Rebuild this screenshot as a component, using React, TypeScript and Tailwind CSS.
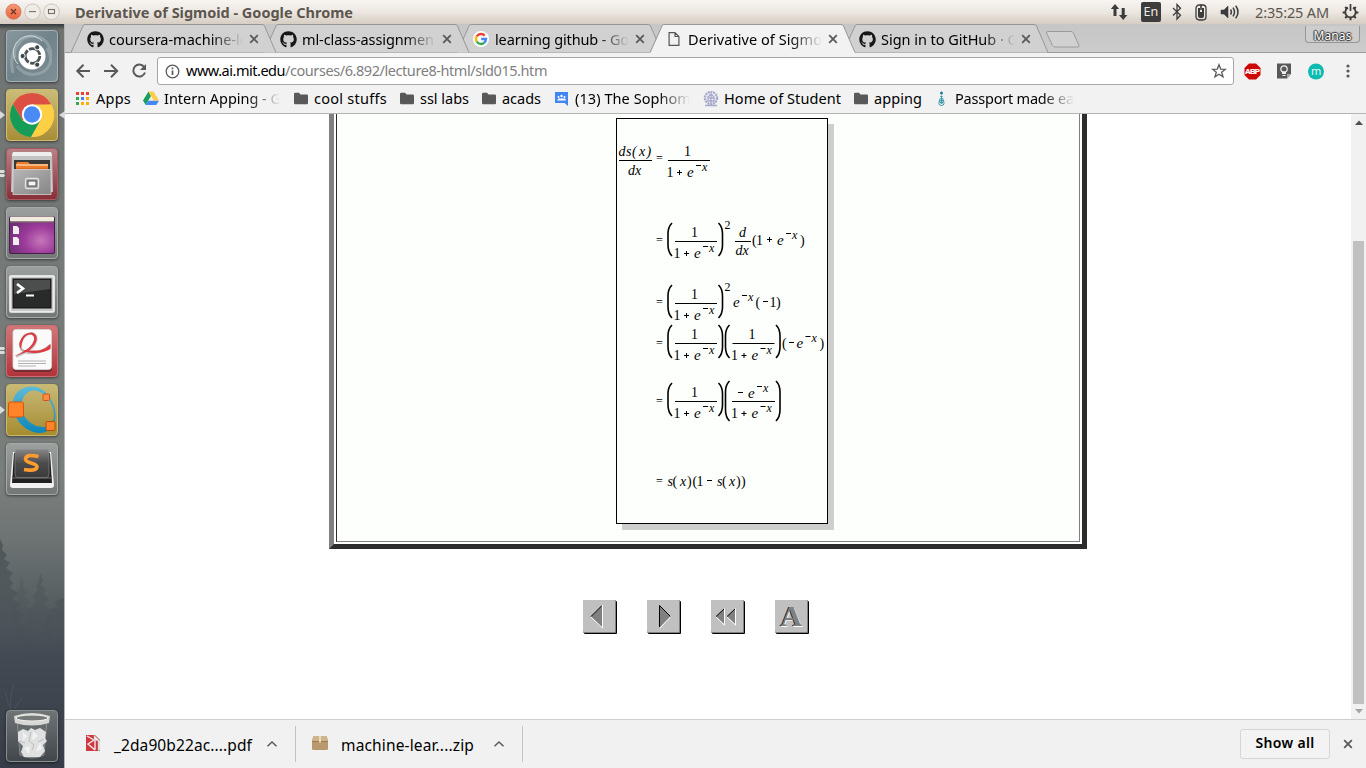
import React, { useLayoutEffect, useRef, useState } from 'react';
import { FaGithub } from 'react-icons/fa';

/** Single line of text whose tracking is tuned so that it spans `w` pixels. */
function Fit({ w, clip, className = '', children }: { w: number; clip?: number; className?: string; children: string }) {
  const ref = useRef<HTMLSpanElement>(null);
  const [spacing, setSpacing] = useState(0);
  useLayoutEffect(() => {
    if (ref.current) setSpacing((w - ref.current.getBoundingClientRect().width) / children.length);
  }, [w, children]);
  return (
    <span
      className={`block shrink-0 whitespace-pre ${clip ? 'overflow-hidden [mask-image:linear-gradient(to_right,black_calc(100%-32px),transparent)]' : ''} ${className}`}
      style={{ width: clip ?? w }}
    >
      <span ref={ref} className="inline-block" style={{ letterSpacing: spacing }}>
        {children}
      </span>
    </span>
  );
}

function Cross({ className = '' }: { className?: string }) {
  return (
    <svg className={className} width="10" height="10" viewBox="0 0 10 10">
      <path d="M1.2 1.2 8.8 8.8M8.8 1.2 1.2 8.8" stroke="#5a5a5a" strokeWidth="1.8" />
    </svg>
  );
}

/* ---------- top panel ---------- */

function TopPanel() {
  return (
    <header className="flex h-6 shrink-0 items-center bg-linear-to-b from-[#f7f5f2] via-[#ece7e1] to-[#d6cdc3] pl-[5px] pr-[7px]">
      <svg width="56" height="18" viewBox="0 0 56 18">
        <defs>
          <linearGradient id="close" x1="0" y1="0" x2="0" y2="1">
            <stop offset="0" stopColor="#f79a77" />
            <stop offset="1" stopColor="#e8623a" />
          </linearGradient>
        </defs>
        <circle cx="8.5" cy="8.7" r="7.6" fill="url(#close)" stroke="#cf7b5e" strokeWidth=".8" />
        <path d="M6 6.2l5 5M11 6.2l-5 5" stroke="#5a2d1e" strokeWidth="1.2" />
        <circle cx="27.5" cy="8.7" r="7.8" fill="#efebe6" stroke="#c8c0b8" strokeWidth=".9" />
        <path d="M24 8.6h7" stroke="#77716a" strokeWidth="1.1" />
        <circle cx="46.5" cy="8.7" r="7.8" fill="#efebe6" stroke="#c8c0b8" strokeWidth=".9" />
        <rect x="43.5" y="6.5" width="6" height="4" fill="none" stroke="#77716a" strokeWidth="1.1" />
      </svg>
      <Fit w={278} className="ml-[14px] -mt-px text-[14.5px] leading-6 font-bold text-[#5c564f]">
        Derivative of Sigmoid - Google Chrome
      </Fit>
      <div className="flex-1" />
      <svg width="18" height="18" viewBox="0 0 18 18" fill="#3c3c3c" className="mr-[13px]">
        <path d="M5 1 0.8 6H3.5V13H6.5V6H9.2ZM13.2 17 9 12H11.7V5H14.7V12H17.4Z" />
      </svg>
      <div className="mr-[11px] flex h-5 w-5 items-center justify-center rounded-[2px] bg-[#3c3c3c] text-[12.5px] leading-5 text-[#f0ece7]">
        <Fit w={15}>En</Fit>
      </div>
      <svg width="10" height="18" viewBox="0 0 10 18" fill="none" stroke="#3c3c3c" strokeWidth="1.3" className="mr-[13px]">
        <path d="M1 5 8.5 12.2 5 16V1.5L8.5 5.3 1 12.5" />
      </svg>
      <svg width="12" height="18" viewBox="0 0 12 18" className="mr-[13px]">
        <rect x="1" y="2" width="10" height="15" rx="3.2" fill="none" stroke="#3c3c3c" strokeWidth="1.3" />
        <path d="M3 5H5V9H7V5H9V13Q9 15 7 15H5Q3 15 3 13Z" fill="#3c3c3c" />
        <path d="M5.2 1.5V7h1.6V1.5z" fill="#3c3c3c" />
      </svg>
      <svg width="20" height="16" viewBox="0 0 20 16" fill="none" stroke="#3c3c3c" strokeWidth="1.5" className="mr-[15px]">
        <path d="M1 6H4L8 2V14L4 10H1Z" fill="#3c3c3c" strokeWidth=".6" />
        <path d="M10.5 5.5Q12.3 8 10.5 10.5M13 3.6Q16 8 13 12.4M15.7 1.8Q20.3 8 15.7 14.2" />
      </svg>
      <Fit w={74} className="-mt-px text-[14.5px] leading-6 text-[#5c564f]">2:35:25 AM</Fit>
      <svg width="17" height="18" viewBox="0 0 17 18" fill="none" stroke="#3c3c3c" className="ml-[13px]">
        <path d="M6 4.6A5.2 5.2 0 1 0 11 4.6" strokeWidth="1.8" />
        <path d="M8.500 1V8" strokeWidth="1.7" />
        <path d="M3.2 4 5 5.8M13.8 4 12 5.8M.6 9.5H3M14 9.5H16.4M3.2 15 5 13.2M13.8 15 12 13.2M8.5 14.5V17.2" strokeWidth="2" />
      </svg>
    </header>
  );
}

/* ---------- launcher ---------- */

const tile = 'relative flex h-[52px] w-[52px] shrink-0 items-center justify-center rounded-[4px] shadow-[0_1px_3px_rgba(0,0,0,0.5)] border';

function Launcher() {
  return (
    <aside className="relative flex w-[65px] shrink-0 flex-col items-start gap-[7px] border-r border-[#b5b5b0] bg-linear-to-b from-[#6f7371] from-0% via-[#7b807d] via-65% to-[#767b79] pl-[6px] pt-[6px] pb-[6px]">
      <div className="absolute inset-x-0 top-0 h-[6px] bg-linear-to-b from-[#33393b] to-transparent" />
      <svg className="absolute left-0 top-[460px] w-16" height="284" viewBox="0 0 64 284">
        <defs>
          <linearGradient id="haze" x1="0" y1="0" x2="0" y2="1">
            <stop offset="0" stopColor="#7a7f7c" />
            <stop offset=".2" stopColor="#6d7373" />
            <stop offset=".4" stopColor="#596062" />
            <stop offset=".6" stopColor="#434a53" />
            <stop offset="1" stopColor="#373d48" />
          </linearGradient>
          <linearGradient id="tree" x1="0" y1="0" x2="0" y2="1">
            <stop offset="0" stopColor="#50575a" />
            <stop offset="1" stopColor="#424953" stopOpacity="0" />
          </linearGradient>
        </defs>
        <rect width="64" height="284" fill="url(#haze)" />
        <path d="M0 55 3 61 2 66 7 71 4 75 10 79 6 84 13 89 9 94 13 99 10 104 18 109 13 115 21 120 16 125 24 130 19 137 28 145V190H0Z" fill="url(#tree)" />
        <path d="M21 92 24 100 23 104 27 108 24 113 30 118 26 122 32 128V170H12V125L18 115 16 110 20 102Z" fill="url(#tree)" opacity=".45" />
        <path d="M40 88 43 96 41 101 46 106 43 110 49 115 44 120 51 128V180H29V126L36 116 32 113 38 106 36 102 39 97Z" fill="url(#tree)" opacity=".65" />
        <path d="M64 114 59 115 55 119 57 123 50 125 52 130 45 133 48 138 42 140 46 145 40 149 47 153 49 175H64Z" fill="url(#tree)" />
        <path d="M12 240Q8 215 14 200M9 222 5 208M14 225 22 214" stroke="#555e66" fill="none" opacity=".5" />
      </svg>

      <div className={`${tile} border-[#a6b1b5] bg-linear-to-br from-[#87979d] via-[#71838a] to-[#7f9096]`}>
        <svg width="50" height="50" viewBox="0 0 50 50" fill="none">
          <path d="M8 27Q5 8 25 5 43 6 44 25M10 35Q20 48 36 41 49 32 40 17M6 42Q1 22 14 10" stroke="#b1bdc1" strokeWidth="3" opacity=".45" />
          <path d="M11 33A16 16 0 0 1 35 10" stroke="#d1d9dc" strokeWidth="1" />
          <circle cx="25" cy="25" r="13.5" fill="#fff" />
          <circle cx="25.5" cy="25" r="7.3" stroke="#4a5358" strokeWidth="2.8" strokeDasharray="13.8 1.5" />
          <g fill="#3f484c" stroke="#fff" strokeWidth="1">
            <circle cx="15.6" cy="25" r="2.6" />
            <circle cx="30.2" cy="16.3" r="2.6" />
            <circle cx="30.2" cy="33.7" r="2.6" />
          </g>
        </svg>
      </div>

      <div className={`${tile} border-[#d0bd70] bg-linear-to-b from-[#cbbc79] to-[#a98e37]`}>
        <svg width="46" height="46" viewBox="0 0 46 46">
          <circle cx="23" cy="23" r="22" fill="#fdc93c" />
          <path d="M4 12A22 22 0 0 1 42.300 12.500L23 14 13.500 28.500Z" fill="#dc5044" />
          <path d="M23 12.500H42.300A22 22 0 0 1 22 45L32 27Z" fill="#fdcf45" />
          <path d="M4 12 13.500 28.500 20 32 31.500 28 22 45A22 22 0 0 1 4 12Z" fill="#149c58" />
          <circle cx="23" cy="22.500" r="10.200" fill="#fff" />
          <circle cx="23" cy="22.500" r="8.200" fill="#4a8af4" />
        </svg>
        <svg className="absolute left-[-7px] top-[20px]" width="6" height="10"><path d="M0 1 5 5 0 9Z" fill="#d9dcda" /></svg>
        <svg className="absolute left-[52px] top-[20px]" width="7" height="10"><path d="M6 1 0 5 6 9Z" fill="#d9dcda" /></svg>
      </div>

      <div className={`${tile} border-[#a85a60] bg-linear-to-b from-[#b78286] to-[#862f38]`}>
        <svg width="46" height="48" viewBox="0 0 46 48">
          <defs>
            <linearGradient id="drawer" x1="0" y1="0" x2="1" y2="1">
              <stop offset="0" stopColor="#b7b7b7" />
              <stop offset="1" stopColor="#858585" />
            </linearGradient>
          </defs>
          <path d="M3 3H43L44 42H2Z" fill="#c3c3c3" />
          <path d="M4 2H42L43 6H3Z" fill="#ededed" />
          <rect x="5" y="10" width="36" height="12" fill="#393939" />
          <path d="M7 14 8 12H19L21 14H39V22H7Z" fill="#ec7c2b" />
          <path d="M7 15H39" stroke="#ffe2b8" strokeWidth="1.2" />
          <path d="M7 19H39" stroke="#cf561b" />
          <rect x="4" y="19.500" width="38" height="25" fill="url(#drawer)" stroke="#ddd" strokeWidth=".7" />
          <rect x="16.500" y="28.500" width="13" height="10" rx="1.5" fill="#999" stroke="#e2e2e2" strokeWidth="1.4" />
          <rect x="19" y="31" width="8" height="5" fill="#f5f5f5" stroke="#555" strokeWidth="1" />
        </svg>
        <svg className="absolute left-[-7px] top-[20px]" width="5" height="10"><path d="M0 1H4L5 2.500 4 4H0ZM0 5H4L5 6.500 4 8H0Z" fill="#d9dcda" /></svg>
      </div>

      <div className={`${tile} border-[#a6aaa8] bg-linear-to-b from-[#9b9f9d] to-[#737775]`}>
        <svg width="46" height="40" viewBox="0 0 46 40" className="mt-[3px]">
          <defs>
            <radialGradient id="desk" cx=".7" cy=".65" r=".75">
              <stop offset="0" stopColor="#c877b9" />
              <stop offset=".5" stopColor="#9c3b9b" />
              <stop offset="1" stopColor="#713078" />
            </radialGradient>
          </defs>
          <rect x=".5" y="1.500" width="45" height="37" rx="1.500" fill="url(#desk)" stroke="#43204a" />
          <rect x="1" y="1.500" width="44" height="5" rx="1" fill="#eeecdc" />
          <path d="M1 7H45" stroke="#76735f" />
          <path d="M4 11H8L10 13V19H4ZM4 22H8L10 24V30H4Z" fill="#f0ecef" />
        </svg>
      </div>

      <div className={`${tile} border-[#a6aaa8] bg-linear-to-b from-[#9b9f9d] to-[#737775]`}>
        <svg width="46" height="40" viewBox="0 0 46 40" className="mt-[3px]">
          <rect x="1" y="2" width="44" height="36" rx="1" fill="#c8c8c8" stroke="#f8f8f8" strokeWidth="1.500" />
          <rect x="4" y="5" width="38" height="29" fill="#292a2a" stroke="#111" />
          <path d="M5 6H41V15L5 20Z" fill="#4c4d4d" />
          <path d="M8 10 14 14.500 8 19" fill="none" stroke="#fff" strokeWidth="2.600" />
          <path d="M17 21.500H25" stroke="#fff" strokeWidth="2" />
        </svg>
      </div>

      <div className={`${tile} border-[#d06c70] bg-linear-to-b from-[#ce7779] to-[#b1333b]`}>
        <svg width="46" height="46" viewBox="0 0 46 46">
          <rect x="4" y="3" width="39" height="41" rx="3" fill="#762d32" />
          <rect x="4" y="1.500" width="38.500" height="40" rx="3" fill="#fafafa" stroke="#ddd" strokeWidth=".8" />
          <path d="M41.500 17Q34 24.500 22 25 9.500 24 11.500 15 15 5 23 5.500C31 8 27 18 18 23.500Q13 26 7 28.500" fill="none" stroke="#c4c4c4" strokeWidth="2.500" />
          <path d="M41.500 16V21Q34 25.500 24 25 9 24 10.500 14.500 14 4 23 4.500C31.500 7 28 18 18 23.500 13 26 6 28 6 28Q14 24 19 20.500C26 14.500 27 8 22 6.500 15 6 12.500 14 12 22 21 22.500 27 23 32 22Q37 20.500 41.500 16Z" fill="#dc3c43" />
          <path d="M9 33H37M9 35.500H37M9 38H27" stroke="#aaa" strokeWidth=".9" />
        </svg>
        <svg className="absolute left-[-7px] top-[20px]" width="5" height="10"><path d="M0 1H4L5 2.500 4 4H0ZM0 5H4L5 6.500 4 8H0Z" fill="#d9dcda" /></svg>
      </div>

      <div className={`${tile} border-[#c9b96a] bg-linear-to-b from-[#c8b976] to-[#a58c2e]`}>
        <svg width="50" height="50" viewBox="0 0 50 50">
          <defs>
            <linearGradient id="ring" x1="0" y1="0" x2="0" y2="1">
              <stop offset="0" stopColor="#5cbbd8" />
              <stop offset="1" stopColor="#0d86bb" />
            </linearGradient>
          </defs>
          <path fillRule="evenodd" d="M6 22C4 5 20-1 31 2.500 42 7 49 20 48.500 31 47.500 46 37 50 26 47 15 43 7 33 6 22ZM14.500 20C14 32 25 42.500 37 42 45 41 47.500 34 47 29 46 17 38 7 28 5.500 20 5 15 12 14.500 20Z" fill="url(#ring)" />
          <rect x="1.500" y="17" width="15" height="15" rx="2" fill="#ff8428" stroke="#d8530d" />
          <rect x="36" y="9" width="6.500" height="6.500" rx="1" fill="#ff8c3f" stroke="#d8531c" />
          <rect x="39" y="36.500" width="9" height="9" rx="1" fill="#ff8428" stroke="#bc4b0a" />
        </svg>
        <svg className="absolute left-[-7px] top-[20px]" width="6" height="10"><path d="M0 1 5 5 0 9Z" fill="#d9dcda" /></svg>
      </div>

      <div className={`${tile} border-[#a6aaa8] bg-linear-to-b from-[#9b9f9d] to-[#737775]`}>
        <svg width="46" height="42" viewBox="0 0 46 42">
          <defs>
            <linearGradient id="key" x1="0" y1="0" x2="0" y2="1">
              <stop offset="0" stopColor="#858585" />
              <stop offset=".5" stopColor="#4b4b4b" />
              <stop offset="1" stopColor="#3a3a3a" />
            </linearGradient>
          </defs>
          <path d="M4 4H42L45 37Q45 40 42 40H4Q1 40 1 37Z" fill="#f1f1f1" />
          <path d="M5 5H41L43 35H3Z" fill="#202020" />
          <rect x="6" y="1.500" width="34" height="28" rx="3" fill="url(#key)" stroke="#8e8e8e" strokeWidth=".7" />
          <path d="M4 30H42" stroke="#777" />
          <path d="M29.500 8.500Q17 5.500 16.500 11C16.500 16 28.500 14.500 28 19Q27 23.500 15 21.500" fill="none" stroke="#ff9c2f" strokeWidth="3.600" />
        </svg>
      </div>

      <div className="flex-1" />
      <div className={`${tile} border-[#8a8e91] bg-linear-to-b from-[#6f7477] to-[#42474c]`}>
        <svg width="42" height="48" viewBox="0 0 42 48">
          <path d="M6 8 9 43Q21 49 33 43L36 8Z" fill="#656a6d" stroke="#aaa" strokeWidth=".6" />
          <path d="M7 20 12 17 17 19 20 16 24 18 29 16 35 20 34 26 36 29 32 33 34 39 29 45H13L10 40 12 34 7 29Z" fill="#dfe0e0" />
          <path d="M12 20 16 24 12 29ZM22 19 27 24 21 28ZM29 30 31 37 25 40ZM13 36 19 34 18 42Z" fill="#f2f2f2" />
          <path d="M20 20 18 29 23 33 21 38M8 29 14 31M33 27 27 30" stroke="#bcbdbe" fill="none" />
          <path d="M3 4Q21-2 39 4L38 11Q21 16 4 11Z" fill="#d6d7d4" />
          <ellipse cx="21" cy="6" rx="16" ry="3" fill="#75797a" stroke="#f3f3ef" />
        </svg>
      </div>
    </aside>
  );
}

/* ---------- tabs ---------- */

function GoogleG() {
  return (
    <svg width="16" height="16" viewBox="0 0 16 16" fill="none" strokeWidth="2.400">
      <circle cx="8" cy="8" r="8" fill="#fff" />
      <path d="M11.700 4.600A5 5 0 0 0 3.700 5.500" stroke="#ea4335" />
      <path d="M3.700 5.400A5 5 0 0 0 3.700 10.600" stroke="#fbbc05" />
      <path d="M3.700 10.500A5 5 0 0 0 11.300 11.700" stroke="#34a853" />
      <path d="M11.200 11.700A5 5 0 0 0 13 8H8.200" stroke="#4285f4" />
    </svg>
  );
}

function PageIcon() {
  return (
    <svg width="16" height="16" viewBox="0 0 16 16" fill="none" stroke="#555" strokeWidth="1.200">
      <path d="M3.100 1.600H9L12.900 5.500V14.400H3.100ZM9 1.600V5.500H12.900" />
    </svg>
  );
}

const github = <FaGithub size={17} color="#181616" />;

const tabs = [
  { icon: github, title: 'coursera-machine-le', w: 139, z: 'z-[5]' },
  { icon: github, title: 'ml-class-assignmen', w: 132, z: 'z-[4]' },
  { icon: <GoogleG />, title: 'learning github - Go', w: 134, z: 'z-[3]' },
  { icon: <PageIcon />, title: 'Derivative of Sigmo', w: 134, z: 'z-10', active: true },
  { icon: github, title: 'Sign in to GitHub · G', w: 137, z: 'z-[1]' },
];

function TabStrip() {
  return (
    <div className="relative flex h-[29px] shrink-0 items-start border-b border-[#9d9d9d] bg-linear-to-b from-[#c6c6c6] to-[#cccccc] pl-[6px]">
      {tabs.map((t) => (
        <div key={t.title} className={`relative flex h-[29px] w-[193px] shrink-0 items-center pl-[16px] pt-[1px] ${t.z}`}>
          <svg className="absolute left-0 top-0" width="208" height="29" viewBox="0 0 208 29">
            <path
              d={t.active ? 'M0 29V28.500L1 28 12 2Q12.500.5 14 .5H191Q193 .5 193.500 2L205 28.500V29Z' : 'M0 28.500 12 2Q12.500.5 14 .5H191Q193 .5 193.500 2L205 28.500'}
              fill={t.active ? '#f2f2f2' : '#d1d1d1'}
            />
            <path d="M0 28.500 12 2Q12.500.5 14 .5H191Q193 .5 193.500 2L205 28.500" fill="none" stroke="#979797" />
          </svg>
          <span className="relative flex w-[22px] shrink-0">{t.icon}</span>
          <Fit w={t.w} clip={134} className="relative -mt-px text-[14.5px] leading-7 text-black">{t.title}</Fit>
          <Cross className="relative ml-[6px] shrink-0" />
        </div>
      ))}
      <svg className="relative ml-[9px] mt-[6px]" width="36" height="19" viewBox="0 0 36 19">
        <path d="M3 1.500H26Q27.500 1.500 28.500 3L34 15.500Q34.500 17 33 17H10Q8.500 17 7.500 15.500L1.500 3Q1 1.500 3 1.500Z" fill="#d1d1d1" stroke="#9b9b9b" />
      </svg>
      <div className="flex-1" />
      <div className="mr-[6px] mt-[2px] flex h-[17px] w-[55px] justify-center rounded-b-[4px] border border-t-0 border-[#979797] bg-[#cdcdcd] text-[12px] leading-[19px] text-white [text-shadow:0_1px_1px_#333,0_-1px_1px_#333,1px_0_1px_#333,-1px_0_1px_#333]">
        <Fit w={38}>Manas</Fit>
      </div>
    </div>
  );
}

/* ---------- toolbar ---------- */

function Toolbar() {
  return (
    <div className="flex h-[34px] shrink-0 items-center bg-[#f2f2f2] pl-[10px] pt-[2px]">
      <svg width="76" height="18" viewBox="0 0 76 18" fill="none" stroke="#595959" strokeWidth="2">
        <path d="M15 9H3M8.500 2.800 2.300 9 8.500 15.200M29 9H42M36 2.800 42.200 9 36 15.200" />
        <path d="M69.300 5.200A6 6 0 1 0 70 10.500" />
        <path d="M71 2V8H65Z" fill="#595959" stroke="none" />
      </svg>
      <div className="ml-[6px] flex h-[28px] w-[1077px] shrink-0 items-center rounded-[3px] border border-[#a6a6a6] bg-white pl-[7px] pr-[6px]">
        <svg width="15" height="15" viewBox="0 0 15 15" fill="none" stroke="#595959">
          <circle cx="7.500" cy="7.500" r="6.300" strokeWidth="1.300" />
          <path d="M7.500 6.500V11M7.500 3.500V5.200" strokeWidth="1.700" />
        </svg>
        <Fit w={99} className="-mt-[2px] ml-[6px] text-[14.5px] leading-6 text-black">www.ai.mit.edu</Fit>
        <Fit w={262} className="-mt-[2px] text-[14.5px] leading-6 text-[#808080]">/courses/6.892/lecture8-html/sld015.htm</Fit>
        <div className="flex-1" />
        <svg width="16" height="16" viewBox="0 0 16 16" fill="none" stroke="#595959" strokeWidth="1.300">
          <path d="M8 1.700 9.700 6.100 14.400 6.300 10.700 9.200 12 13.800 8 11.200 4 13.800 5.300 9.200 1.600 6.300 6.300 6.100Z" />
        </svg>
      </div>
      <svg className="ml-[10px]" width="17" height="17" viewBox="0 0 17 17">
        <path d="M5 .5H12L16.500 5V12L12 16.500H5L.5 12V5Z" fill="#cc0706" />
        <text x="1" y="11.300" fontFamily="Liberation Sans, sans-serif" fontSize="7.800" fontWeight="bold" fill="#fff" stroke="#fff" strokeWidth=".2" textLength="15">ABP</text>
      </svg>
      <svg className="ml-[15px]" width="16" height="16" viewBox="0 0 16 16">
        <path d="M1 .5H15V11L11 15.500H1Z" fill="#585858" />
        <path d="M11 15.500V11H15Z" fill="#aaa" />
        <circle cx="8" cy="6" r="3.200" fill="none" stroke="#f2f2f2" strokeWidth="1.200" />
        <path d="M6 8.500H10V11H6ZM6.500 12H9.500V13H6.500Z" fill="#f2f2f2" />
      </svg>
      <svg className="ml-[16px]" width="17" height="17" viewBox="0 0 17 17">
        <circle cx="8" cy="8.500" r="8" fill="#0dbbb0" />
        <text x="3" y="12" fontFamily="Noto Sans, sans-serif" fontSize="11" fill="#e6faf8">m</text>
      </svg>
      <svg className="ml-[21px]" width="4" height="16" viewBox="0 0 4 16" fill="#595959">
        <circle cx="2" cy="3" r="1.600" />
        <circle cx="2" cy="8" r="1.600" />
        <circle cx="2" cy="13" r="1.600" />
      </svg>
    </div>
  );
}

/* ---------- bookmarks ---------- */

const folder = (
  <svg width="14" height="13" viewBox="0 0 14 13">
    <path d="M0 2Q0 .8 1.200.8H5L6.500 2.500H12.800Q14 2.500 14 3.700V11Q14 12.200 12.800 12.200H1.200Q0 12.200 0 11Z" fill="#595959" />
  </svg>
);

const bookmarks = [
  {
    icon: (
      <svg width="13" height="13" viewBox="0 0 13 13">
        <path d="M0 0h3v3H0zM5 0h3v3H5zM10 0h3v3h-3z" fill="#ea4335" />
        <path d="M0 5h3v3H0zM0 10h3v3H0z" fill="#34a853" />
        <path d="M5 5h3v3H5z" fill="#4285f4" />
        <path d="M10 5h3v3h-3zM5 10h3v3H5zM10 10h3v3h-3z" fill="#fbae05" />
      </svg>
    ),
    text: 'Apps', w: 35, slot: 'w-5', after: 'mr-3',
  },
  {
    icon: (
      <svg width="16" height="15" viewBox="0 0 16 15">
        <path d="M5.500.5 0 9.500 2.700 14 8 5Z" fill="#17a05d" />
        <path d="M5.500.5H10.500L16 9.500H10.700Z" fill="#fdcd45" />
        <path d="M5.200 9.700H16L13.300 14H2.700Z" fill="#4688f1" />
      </svg>
    ),
    text: 'Intern Apping - G', w: 117, clip: 116, slot: 'w-[21px]', after: 'mr-[14px]',
  },
  { icon: folder, text: 'cool stuffs', w: 73, slot: 'w-5', after: 'mr-[13px]' },
  { icon: folder, text: 'ssl labs', w: 49, slot: 'w-5', after: 'mr-[13px]' },
  { icon: folder, text: 'acads', w: 39, slot: 'w-5', after: 'mr-[14px]' },
  {
    icon: (
      <svg width="13" height="16" viewBox="0 0 13 16">
        <path d="M0 1H13V15L9.500 12H0Z" fill="#4285f4" />
        <path d="M2 9.500Q4 6 5.500 8 6.500 6 8 8 10 6 11 9.500Z" fill="#fff" />
        <circle cx="3.500" cy="6" r="1" fill="#fff" /><circle cx="6.500" cy="5" r="1.200" fill="#fff" /><circle cx="9.500" cy="6" r="1" fill="#fff" />
      </svg>
    ),
    text: '(13) The Sophom', w: 116, clip: 115, slot: 'w-5', after: 'mr-[13px]',
  },
  {
    icon: (
      <svg width="16" height="16" viewBox="0 0 16 16" fill="none" stroke="#a9a9cd">
        <circle cx="8" cy="7" r="6" strokeWidth="2.400" strokeDasharray="2 .7" />
        <path d="M5 10V6L8 3 11 6V10ZM8 3V12M2 14.500H14M5 7H11" strokeWidth="1.300" />
      </svg>
    ),
    text: 'Home of Student', w: 117, slot: 'w-[21px]', after: 'mr-[13px]',
  },
  { icon: folder, text: 'apping', w: 48, slot: 'w-5', after: 'mr-[15px]' },
  {
    icon: (
      <svg width="10" height="16" viewBox="0 0 10 16" fill="none" stroke="#3a98aa">
        <circle cx="4.500" cy="2" r="1.500" fill="#177f95" stroke="none" />
        <path d="M4.500 4.500V12M3.300 5.500H5.700M3.500 7Q-.2 14.500 4.500 14.500 9 14.500 5.500 7M2.500 10Q4.500 8.500 6.500 10L4.500 13Z" />
      </svg>
    ),
    text: 'Passport made ea', w: 119, clip: 119, slot: 'w-[18px]', after: '',
  },
];

function Bookmarks() {
  return (
    <div className="flex h-[27px] shrink-0 items-center border-b border-[#b6b4b6] bg-[#f2f2f2] pb-[3px] pl-[11px]">
      {bookmarks.map((b) => (
        <div key={b.text} className={`flex h-6 shrink-0 items-center ${b.after}`}>
          <span className={`flex shrink-0 ${b.slot}`}>{b.icon}</span>
          <Fit w={b.w} clip={b.clip} className="-mt-px text-[14.5px] leading-6 text-black">{b.text}</Fit>
        </div>
      ))}
    </div>
  );
}

/* ---------- slide ---------- */

type Glyphs = { t: string; x: number[]; y: number; i?: boolean; s?: number };

function G({ t, x, y, i, s = 14 }: Glyphs) {
  return (
    <text x={x.map((v) => v + 0.5).join(' ')} y={y + 0.6} fontSize={s} fontStyle={i ? 'italic' : 'normal'}>
      {t}
    </text>
  );
}

function Bar({ x, y, w }: { x: number; y: number; w: number }) {
  return <rect x={x} y={y} width={w} height="1" />;
}

/** e raised to minus x, with e at (x, y). */
function Exp({ x, y }: { x: number; y: number }) {
  return (
    <>
      <G t="e" x={[x - 0.5]} y={y} i s={15} />
      <Bar x={x + 9} y={y - 11} w={5} />
      <G t="x" x={[x + 14.5]} y={y - 6} i s={12} />
    </>
  );
}

function Denominator({ x, y }: { x: number; y: number }) {
  return (
    <>
      <G t="1" x={[x - 1]} y={y} />
      <Bar x={x + 10} y={y - 4} w={5} />
      <rect x={x + 12} y={y - 6} width="1" height="5" />
      <Exp x={x + 20} y={y} />
    </>
  );
}

function Equals({ y }: { y: number }) {
  return (
    <text x="656" y={y + 0.5} fontSize="12">
      =
    </text>
  );
}

function Parens({ x, top, h, w }: { x: number; top: number; h: number; w: number }) {
  const r = x + w;
  const b = top + h;
  return (
    <path
      d={`M${x + 5} ${top}Q${x + 1} ${top + 4} ${x + 1} ${top + 11}V${b - 11}Q${x + 1} ${b - 4} ${x + 5} ${b}M${r - 5} ${top}Q${r - 1} ${top + 4} ${r - 1} ${top + 11}V${b - 11}Q${r - 1} ${b - 4} ${r - 5} ${b}`}
      fill="none"
      stroke="#000"
      strokeWidth="1.6"
    />
  );
}

/** Parenthesised 1 / (1 + e^-x), fraction bar at height y. */
function Sigma({ x = 675, y }: { x?: number; y: number }) {
  return (
    <>
      <G t="1" x={[x + 15.500]} y={y - 5} />
      <Bar x={x} y={y} w={42} />
      <Denominator x={x - 1} y={y + 16} />
      <Parens x={x - 8} top={y - 18} h={33} w={56.500} />
    </>
  );
}

function Formula() {
  return (
    <svg className="block" width="210" height="404" viewBox="617 119 210 404" fill="#000" fontFamily="Liberation Serif, serif">
      <G t="ds(x)" x={[618, 625.5, 631.5, 638.5, 646]} y={155} i />
      <Bar x={619} y={160} w={33} />
      <G t="dx" x={[627.5, 634.5]} y={174} i />
      <Equals y={161} />
      <G t="1" x={[683.5]} y={155} />
      <Bar x={668} y={160} w={42} />
      <Denominator x={667} y={176} />

      <Equals y={243} />
      <Sigma y={241} />
      <G t="2" x={[724]} y={228} s={12} />
      <G t="d" x={[738.5]} y={236} i />
      <Bar x={735} y={241} w={16} />
      <G t="dx" x={[735, 742]} y={254} i />
      <G t="(1" x={[751.5, 755.5]} y={244} />
      <Bar x={767} y={239} w={5} />
      <rect x="769" y="237" width="1" height="5" />
      <Exp x={777} y={244} />
      <G t=")" x={[799.500]} y={244} />

      <Equals y={305} />
      <Sigma y={303} />
      <G t="2" x={[724]} y={290} s={12} />
      <Exp x={733} y={306} />
      <G t="(" x={[755]} y={306} />
      <Bar x={763} y={301} w={5} />
      <G t="1)" x={[769, 775.5]} y={306} />

      <Equals y={346} />
      <Sigma y={343} />
      <Sigma x={732.5} y={343} />
      <G t="(" x={[781.500]} y={347} />
      <Bar x={789} y={342} w={5} />
      <Exp x={796.500} y={347} />
      <G t=")" x={[819]} y={347} />

      <Equals y={404} />
      <Sigma y={401} />
      <Bar x={738} y={392} w={5} />
      <Exp x={748} y={397} />
      <Bar x={732} y={401} w={43} />
      <Denominator x={731.5} y={417} />
      <Parens x={724.5} top={381} h={40} w={56.500} />

      <Equals y={484} />
      <G t="s" x={[667]} y={485} i />
      <G t="(" x={[672]} y={485} />
      <G t="x" x={[679.5]} y={485} i />
      <G t=")(1" x={[686.500, 692, 696]} y={485} />
      <Bar x={707} y={480} w={5} />
      <G t="s" x={[716.5]} y={485} i />
      <G t="(" x={[721.5]} y={485} />
      <G t="x" x={[728.5]} y={485} i />
      <G t="))" x={[735.5, 740.5]} y={485} />
    </svg>
  );
}

const arrows = [
  <g key="prev"><path d="M8 16.500 19 5.500V27.500Z" fill="#808080" /><path d="M8 16.500 19 5.500" stroke="#000" /><path d="M8 17 19.500 28V5" fill="none" stroke="#fff" /></g>,
  <g key="next"><path d="M12.500 5.500 23.500 16.500 12.500 27.500Z" fill="#808080" /><path d="M12.500 27V5.500L23.500 16.500" fill="none" stroke="#000" /><path d="M13 28 24 16.500" stroke="#fff" /></g>,
  <g key="first"><path d="M5 16.500 13 9V24ZM16 16.500 24 9V24Z" fill="#808080" /><path d="M5 16.500 13 9M16 16.500 24 9" stroke="#000" /><path d="M5 17 13.500 25V8.500M16 17 24.500 25V8.500" fill="none" stroke="#fff" /></g>,
  <g key="text" fontFamily="Liberation Serif, serif" fontSize="30" fontWeight="bold">
    <text x="6" y="27" fill="#fff">A</text>
    <text x="4.500" y="25.500" fill="#000">A</text>
    <text x="5.200" y="26.200" fill="#808080">A</text>
  </g>,
];

function Page() {
  return (
    <div className="flex min-h-0 flex-1 bg-white">
      <main className="flex flex-1 flex-col pl-[264px]">
        <div className="h-[435px] w-[758px] shrink-0 border-[5px] border-t-0 border-l-[#808080] border-r-[#2c2c2c] border-b-[#2c2c2c] px-[2px] pb-[2px]">
          <div className="flex h-full justify-start border border-t-0 border-l-[#2c2c2c] border-r-[#808080] border-b-[#808080] bg-[#fcfffc] pl-[279px] pt-[4px]">
            <div className="h-[406px] w-[212px] border border-black bg-[#fdfffc] shadow-[6px_6px_0_#cdcecd]">
              <Formula />
            </div>
          </div>
        </div>
        <nav className="mt-[51px] flex gap-[30px] pl-[254px]">
          {arrows.map((a) => (
            <svg key={a.key} width="34" height="34" viewBox="0 0 34 34">
              <rect x="1" y="1" width="33" height="33" rx="1" fill="#000" />
              <rect width="33" height="33" rx="1" fill="#808080" />
              <rect width="32" height="32" rx="1" fill="#c0c0c0" />
              {a}
            </svg>
          ))}
        </nav>
      </main>
      <div className="flex w-[15px] shrink-0 flex-col items-center bg-[#f1f1f1] pt-[6px] pb-[5px]">
        <svg width="8" height="5"><path d="M0 5 4 .5 8 5Z" fill="#505050" /></svg>
        <div className="mt-[116px] h-[463px] w-[11px] bg-[#c1c1c1]" />
        <div className="flex-1" />
        <svg width="8" height="5"><path d="M0 0H8L4 4.500Z" fill="#a3a3a3" /></svg>
      </div>
    </div>
  );
}

/* ---------- downloads ---------- */

function Caret() {
  return (
    <svg width="12" height="8" viewBox="0 0 12 8">
      <path d="M1.500 6.300 6 2 10.500 6.300" fill="none" stroke="#5a5a5a" strokeWidth="1.500" />
    </svg>
  );
}

function Downloads() {
  return (
    <footer className="flex h-[49px] shrink-0 items-center border-t border-[#cfcfcf] bg-[#f1f1f1]">
      <div className="flex h-9 w-[231px] items-center border-r border-[#c3c3c3] pl-[21px]">
        <svg className="-mt-[3px]" width="14" height="16" viewBox="0 0 14 16">
          <path d="M0 0H9L14 5V16H0Z" fill="#cc3941" />
          <path d="M1 1 8 5 2 9 9 15M9 5V15" stroke="#fae4e4" strokeWidth="1.400" fill="none" />
          <path d="M8 0 14 6V15L12 16V6L8 5Z" fill="#eee" stroke="#aaa" strokeWidth=".5" />
        </svg>
        <Fit w={138} className="ml-[14px] mt-px text-[15.5px] leading-8 text-black">_2da90b22ac....pdf</Fit>
        <span className="ml-[14px]"><Caret /></span>
      </div>
      <div className="flex h-9 w-[227px] items-center border-r border-[#c3c3c3] pl-[16px]">
        <svg className="-mt-[3px]" width="16" height="14" viewBox="0 0 16 14">
          <path d="M1.500 0H14.500L16 4.500V12.500Q16 14 14.500 14H1.500Q0 14 0 12.500V4.500Z" fill="#b89a6d" />
          <path d="M1.500 0H14.500L16 5H0Z" fill="#cfb58e" />
          <path d="M0 5.500H16" stroke="#9b7d50" />
          <path d="M7 0H9V6.500H7Z" fill="#ead9bd" />
        </svg>
        <Fit w={133} className="ml-[13px] mt-px text-[15.5px] leading-8 text-black">machine-lear....zip</Fit>
        <span className="ml-[19px]"><Caret /></span>
      </div>
      <div className="flex-1" />
      <button className="flex h-[30px] w-[90px] items-center justify-center rounded-[3px] border border-[#d5d5d5] bg-[#f3f3f3] pb-[3px] text-[14px] font-semibold text-black">
        <Fit w={59}>Show all</Fit>
      </button>
      <Cross className="ml-[13px] mr-[13px]" />
    </footer>
  );
}

export default function App() {
  return (
    <div className="flex h-[768px] w-[1366px] flex-col overflow-hidden bg-white font-['Noto_Sans',sans-serif]">
      <TopPanel />
      <div className="flex min-h-0 flex-1">
        <Launcher />
        <div className="flex min-w-0 flex-1 flex-col">
          <TabStrip />
          <Toolbar />
          <Bookmarks />
          <Page />
          <Downloads />
        </div>
      </div>
    </div>
  );
}
